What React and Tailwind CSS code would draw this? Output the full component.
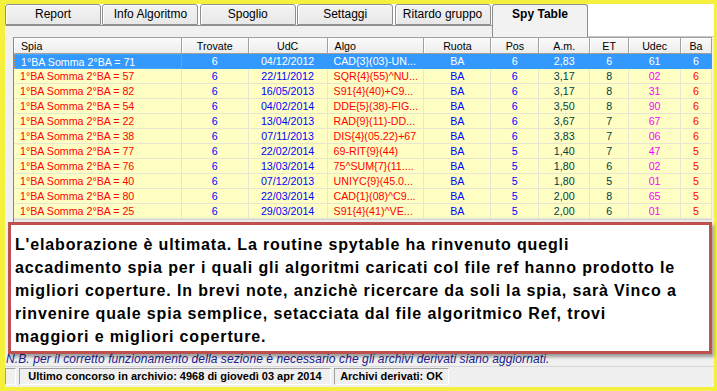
import React from "react";

const cols = [
  { w: "w-[168px]", align: "justify-start pl-[6px]", color: "text-[#ff0000]" },
  { w: "w-[67px]", align: "justify-center", color: "text-[#0000ff]" },
  { w: "w-[79px]", align: "justify-center", color: "text-[#0000ff]" },
  { w: "w-[97px]", align: "justify-start pl-[6px]", color: "text-[#ff0000]" },
  { w: "w-[67px]", align: "justify-center", color: "text-[#0000ff]" },
  { w: "w-[48px]", align: "justify-center", color: "text-[#0000ff]" },
  { w: "w-[51px]", align: "justify-center", color: "text-[#004040]" },
  { w: "w-[39px]", align: "justify-center", color: "text-[#004040]" },
  { w: "w-[52px]", align: "justify-center", color: "text-[#ff00ff]" },
  { w: "w-[31px]", align: "justify-center", color: "text-[#ff0000]" },
];

const headers = ["Spia", "Trovate", "UdC", "Algo", "Ruota", "Pos", "A.m.", "ET", "Udec", "Ba"];

const data = [
  ["71", "6", "04/12/2012", "CAD{3}(03)-UN...", "BA", "6", "2,83", "6", "61", "6"],
  ["57", "6", "22/11/2012", "SQR{4}(55)^NU...", "BA", "6", "3,17", "8", "02", "6"],
  ["82", "6", "16/05/2013", "S91{4}(40)+C9...", "BA", "6", "3,17", "8", "31", "6"],
  ["54", "6", "04/02/2014", "DDE{5}(38)-FIG...", "BA", "6", "3,50", "8", "90", "6"],
  ["22", "6", "13/04/2013", "RAD{9}(11)-DD...", "BA", "6", "3,67", "7", "67", "6"],
  ["38", "6", "07/11/2013", "DIS{4}(05.22)+67", "BA", "6", "3,83", "7", "06", "6"],
  ["77", "6", "22/02/2014", "69-RIT{9}(44)", "BA", "5", "1,40", "7", "47", "5"],
  ["76", "6", "13/03/2014", "75^SUM{7}(11....", "BA", "5", "1,80", "6", "02", "5"],
  ["40", "6", "07/12/2013", "UNIYC{9}(45.0...", "BA", "5", "1,80", "5", "01", "5"],
  ["80", "6", "22/03/2014", "CAD{1}(08)^C9...", "BA", "5", "2,00", "8", "65", "5"],
  ["25", "6", "29/03/2014", "S91{4}(41)^VE...", "BA", "5", "2,00", "6", "01", "5"],
];

const tabs = ["Report", "Info Algoritmo", "Spoglio", "Settaggi", "Ritardo gruppo"];

const lines = [
  "L'elaborazione è ultimata. La routine spytable ha rinvenuto quegli",
  "accadimento spia per i quali gli algoritmi caricati col file ref hanno prodotto le",
  "migliori coperture. In brevi note, anzichè ricercare da soli la spia, sarà Vinco a",
  "rinvenire quale spia semplice, setacciata dal file algoritmico Ref, trovi",
  "maggiori e migliori coperture.",
];

function Tab({ label }) {
  return (
    <div className="w-[96px] h-[21px] border border-[#8e8f8f] rounded-t-[3px] bg-gradient-to-b from-[#f3f3f3] to-[#e8e8e8] flex justify-center pt-[2px] text-[12px] leading-[14px] text-black shadow-[inset_1px_1px_0_#ffffff]">
      {label}
    </div>
  );
}

export default function App() {
  return (
    <div className="relative w-[717px] h-[391px] bg-[#f4f03c] pt-[4px] pl-[5px] pr-[3px] pb-[4px] font-['Liberation_Sans',Arial,sans-serif] overflow-hidden">
      <div className="h-full flex flex-col bg-[#f0f0f0]">
        {/* Tabs */}
        <div className="h-[33px] flex bg-white shrink-0">
          <div className="w-[487px] flex flex-col">
            <div className="h-[21px] flex gap-[1.4px]">
              {tabs.map((t) => (
                <Tab key={t} label={t} />
              ))}
            </div>
            <div className="flex-1 bg-[#f0f0f0] border-t border-[#8e8f8f] border-l border-l-white"></div>
          </div>
          <div className="w-[96px] h-[33px] border-t border-x border-[#8e8f8f] rounded-t-[3px] bg-[#f2f2f2] flex justify-center pt-[2px] text-[12px] leading-[14px] font-bold text-black">
            Spy Table
          </div>
          <div className="flex-1 bg-white border-b border-[#c8c8c8]"></div>
        </div>

        {/* Table region */}
        <div className="h-[316px] flex shrink-0">
          <div className="w-[8px] bg-[#f0f0f0]"></div>
          <div className="w-[699px] flex flex-col border-l border-[#828790] bg-white overflow-hidden text-[10.67px]">
            <div className="h-[17px] flex shrink-0 bg-gradient-to-b from-[#fbfbfb] to-[#ececec] border-b border-[#a0a0a0] border-t border-t-[#a0a0a0]">
              {headers.map((h, i) => (
                <div
                  key={h}
                  className={`${cols[i].w} ${i === 0 || i === 3 ? "justify-start pl-[7px]" : "justify-center"} flex items-center border-r border-[#a0a0a0] shadow-[inset_1px_0_0_#ffffff] text-black leading-[16px]`}
                >
                  {h}
                </div>
              ))}
            </div>
            {data.map((r, ri) => {
              const sel = ri === 0;
              return (
                <div key={ri} className={`h-[15px] flex shrink-0 ${sel ? "bg-[#3399ff]" : "bg-[#ffffc4]"}`}>
                  {cols.map((c, ci) => {
                    const text = ci === 0 ? `1°BA Somma 2°BA = ${r[0]}` : r[ci];
                    return (
                      <div
                        key={ci}
                        className={`${c.w} ${c.align} ${sel ? "text-white border-b border-r border-[#3399ff]" : `${c.color} border-b border-r border-[#e6e6d2]`} ${sel && ci === 0 ? "border border-dotted border-[#d89a4a]" : ""} flex items-center leading-[14px] whitespace-nowrap overflow-hidden`}
                      >
                        {text}
                      </div>
                    );
                  })}
                </div>
              );
            })}
            <div className="h-[17px] shrink-0 bg-[#ebebeb] border-t border-[#d4d4d4]"></div>
            <div className="flex-1 bg-white"></div>
          </div>
          <div className="flex-1 bg-[#f0f0f0]"></div>
        </div>

        {/* N.B. */}
        <div className="h-[13px] shrink-0 flex items-end pl-[1px] text-[12px] italic text-[#202090] leading-[13px] whitespace-nowrap tracking-[0.1px]">
          N.B. per il corretto funzionamento della sezione è necessario che gli archivi derivati siano aggiornati.
        </div>

        {/* Status bar */}
        <div className="h-[21px] shrink-0 flex items-start gap-[3px] pt-[1px] border-t border-[#d7d7d7] bg-[#f0f0f0]">
          <div className="w-[11px] h-[17px] border border-t-[#a0a0a0] border-l-[#a0a0a0] border-b-white border-r-white"></div>
          <div className="w-[312px] h-[17px] flex items-center justify-center border border-t-[#a0a0a0] border-l-[#a0a0a0] border-b-white border-r-white text-[11px] font-bold text-black whitespace-nowrap">
            Ultimo concorso in archivio: 4968 di giovedì 03 apr 2014
          </div>
          <div className="w-[115px] h-[17px] flex items-center justify-center border border-t-[#a0a0a0] border-l-[#a0a0a0] border-b-white border-r-white text-[11px] font-bold text-black whitespace-nowrap">
            Archivi derivati: OK
          </div>
        </div>
      </div>

      {/* Overlay message box */}
      <div className="absolute left-[8px] top-[222px] w-[704px] h-[132px] bg-white border-[3px] border-[#c0504d] shadow-[2px_3px_3px_rgba(0,0,0,0.35)] pt-[8px] pl-[4px] text-[16px] font-bold text-black leading-[23px] tracking-[0.85px]">
        {lines.map((l) => (
          <div key={l} className="whitespace-nowrap">
            {l}
          </div>
        ))}
      </div>
    </div>
  );
}
